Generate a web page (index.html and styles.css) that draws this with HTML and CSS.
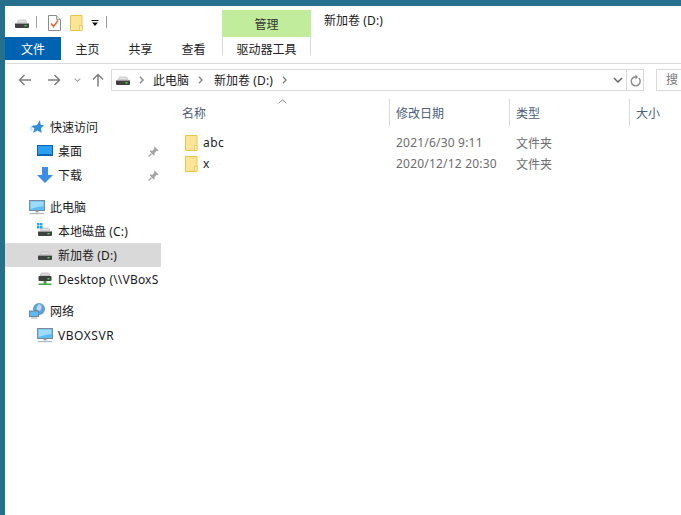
FILE: index.html
```html
<!DOCTYPE html>
<html lang="zh-CN">
<head>
    <meta charset="UTF-8">
    <meta name="viewport" content="width=device-width, initial-scale=1.0">
    <title>新加卷 (D:)</title>
    <link rel="stylesheet" href="styles.css">
</head>
<body>
    <svg class="icon-defs" width="0" height="0">
        <defs>
            <symbol id="drive" viewBox="0 0 16 16">
                <path d="M3 7.500 4.500 5h7L13 7.500z" fill="#e2e2e2" stroke="#b4b4b4" stroke-width=".6"/>
                <rect x="1" y="8" width="14" height="5" rx="1" fill="#404040"/>
                <rect x="1" y="8" width="14" height="1" fill="#9a9a9a"/>
                <rect x="10.500" y="10" width="2" height="1.500" fill="#46d846"/>
            </symbol>
            <symbol id="folder" viewBox="0 0 13 16">
                <path d="M.5.500h11.500v15H.5z" fill="#fde597" stroke="#eac54e"/>
                <path d="M9.500 15.500v-5h2.500v5z" fill="#fff3c4" stroke="#eac54e" stroke-width=".8"/>
            </symbol>
            <symbol id="pin" viewBox="0 0 11 11">
                <path d="M6.500.5 10.500 4.500 9.300 5.300 8.500 5 6.500 7 6.700 9 5.800 9.500 1.800 5.500 2.300 4.600 4.300 4.800 6.300 2.800 6 2z" fill="#a3a3a3"/>
                <path d="M3.500 7.700.6 10.500" stroke="#a3a3a3" stroke-width="1.200"/>
            </symbol>
            <symbol id="monitor" viewBox="0 0 16 16">
                <rect x=".5" y="1.500" width="15" height="10" fill="#5cbcf5" stroke="#7a8b99"/>
                <path d="M1.500 2.500h13v4.500q-6 .5-13 3z" fill="#9ddcfb"/>
                <path d="M6.500 12h3v1.500h-3z" fill="#9aa7b2"/>
                <path d="M1 14h14v1.200H1z" fill="#b0b8c0"/>
            </symbol>
            <symbol id="chev" viewBox="0 0 5 8">
                <path d="M1 .8 4 4 1 7.200" fill="none" stroke="#8a8a8a" stroke-width="1.500"/>
            </symbol>
        </defs>
    </svg>

    <div class="window">
        <div class="title-row">
            <div class="qat">
                <svg class="qat-drive"><use href="#drive"/></svg>
                <span class="qat-sep"></span>
                <svg class="qat-props" viewBox="0 0 13 16">
                    <path d="M.5.500h8l4 4v11H.5z" fill="#fff" stroke="#8c8c8c"/>
                    <path d="M8.500.5v4h4" fill="#e6e6e6" stroke="#8c8c8c" stroke-width=".8"/>
                    <path d="M3 8.500l2.500 3 4.500-6" fill="none" stroke="#e8642c" stroke-width="1.500"/>
                </svg>
                <svg class="qat-folder"><use href="#folder"/></svg>
                <svg class="qat-down" viewBox="0 0 8 8">
                    <path d="M.5 1h7v1h-7zM1 3.500h6L4 7z" fill="#111"/>
                </svg>
                <span class="qat-sep"></span>
            </div>
            <div class="context-head">管理</div>
            <div class="window-title">新加卷 <span class="latin">(D:)</span></div>
        </div>

        <div class="ribbon">
            <div class="tab tab-file">文件</div>
            <div class="tab tab-plain">主页</div>
            <div class="tab tab-plain">共享</div>
            <div class="tab tab-plain">查看</div>
            <div class="tab tab-context">驱动器工具</div>
        </div>

        <div class="nav-bar">
            <svg class="arrow-back" viewBox="0 0 13 12">
                <path d="M13 6H2M6.500 1 1.500 6l5 5" fill="none" stroke="#7f7f7f" stroke-width="1.500"/>
            </svg>
            <svg class="arrow-fwd" viewBox="0 0 13 12">
                <path d="M0 6h11M6.500 1l5 5-5 5" fill="none" stroke="#7f7f7f" stroke-width="1.500"/>
            </svg>
            <svg class="arrow-menu" viewBox="0 0 7 5">
                <path d="M.7.700 3.500 3.500 6.300.7" fill="none" stroke="#a6a6a6" stroke-width="1.200"/>
            </svg>
            <svg class="arrow-up" viewBox="0 0 12 14">
                <path d="M6 13.500V2M1 6.500l5-5 5 5" fill="none" stroke="#7f7f7f" stroke-width="1.500"/>
            </svg>
            <div class="address">
                <svg class="crumb-icon"><use href="#drive"/></svg>
                <svg class="crumb-sep"><use href="#chev"/></svg>
                <span class="crumb">此电脑</span>
                <svg class="crumb-sep"><use href="#chev"/></svg>
                <span class="crumb">新加卷 <span class="latin">(D:)</span></span>
                <svg class="crumb-sep"><use href="#chev"/></svg>
                <svg class="address-drop" viewBox="0 0 10 6">
                    <path d="M1 1l4 4 4-4" fill="none" stroke="#666" stroke-width="1.500"/>
                </svg>
                <div class="refresh">
                    <svg viewBox="0 0 12 13">
                        <path d="M9.700 4A4.500 4.500 0 1 1 5.500 3H8" fill="none" stroke="#8a8a8a" stroke-width="1.400"/>
                        <path d="M6.500.5 9 3 6.500 5.500z" fill="#8a8a8a"/>
                    </svg>
                </div>
            </div>
            <div class="search">搜</div>
        </div>

        <div class="main">
            <nav class="tree">
                <div class="tree-group">
                    <div class="tree-item">
                        <svg class="tree-icon" viewBox="0 0 16 16">
                            <path d="M11 1 11.500 5.500 15 6.500 12 9 12.500 14 8.500 11.500 4 14 5.500 9.500 2 7 8 6z" fill="#2f8fdc"/>
                            <path d="M.5 9h3M1.500 11h2" stroke="#9cc9ee"/>
                        </svg>
                        <span>快速访问</span>
                    </div>
                    <div class="tree-item sub">
                        <svg class="tree-icon" viewBox="0 0 16 16">
                            <rect x=".5" y="2.500" width="15" height="10" fill="#2aa0f2" stroke="#0b62b5"/>
                            <path d="M1.500 11h13v1h-13z" fill="#0b62b5"/>
                        </svg>
                        <span>桌面</span>
                        <svg class="pin"><use href="#pin"/></svg>
                    </div>
                    <div class="tree-item sub">
                        <svg class="tree-icon" viewBox="0 0 16 16">
                            <path d="M5 0h6v8h5l-8 8-8-8h5z" fill="#3a8ee6"/>
                        </svg>
                        <span>下载</span>
                        <svg class="pin"><use href="#pin"/></svg>
                    </div>
                </div>
                <div class="tree-group">
                    <div class="tree-item">
                        <svg class="tree-icon"><use href="#monitor"/></svg>
                        <span>此电脑</span>
                    </div>
                    <div class="tree-item sub">
                        <svg class="tree-icon" viewBox="0 0 16 16">
                            <use href="#drive" width="16" height="16"/>
                            <path d="M0 0h2.500v2.500H0zM3 0h2.500v2.500H3zM0 3h2.500v2.500H0zM3 3h2.500v2.500H3z" fill="#22a5f0"/>
                        </svg>
                        <span>本地磁盘 <span class="latin">(C:)</span></span>
                    </div>
                    <div class="tree-item sub selected">
                        <svg class="tree-icon"><use href="#drive"/></svg>
                        <span>新加卷 <span class="latin">(D:)</span></span>
                    </div>
                    <div class="tree-item sub">
                        <svg class="tree-icon" viewBox="0 0 16 16">
                            <path d="M3 4.500 4.500 2h7L13 4.500z" fill="#dcdcdc" stroke="#a8a8a8" stroke-width=".6"/>
                            <rect x="1.500" y="5" width="13" height="5" rx="1" fill="#3e3e3e"/>
                            <rect x="10.500" y="7" width="2" height="1.500" fill="#46d846"/>
                            <path d="M6.500 10h3v2.500h5V14h-13v-1.500h5z" fill="#43a843"/>
                        </svg>
                        <span class="latin">Desktop (\\VBoxS</span>
                    </div>
                </div>
                <div class="tree-group">
                    <div class="tree-item">
                        <svg class="tree-icon" viewBox="0 0 16 16">
                            <circle cx="10" cy="6" r="6" fill="#5f9fd6"/>
                            <path d="M10 1q3.500 1 2.500 4.500t-3.500 2-1-4z" fill="#b9d9ee"/>
                            <rect x=".5" y="8" width="9" height="5.500" fill="#5cbcf5" stroke="#6f8494"/>
                            <path d="M2 14.500h6v1H2z" fill="#9aa7b2"/>
                        </svg>
                        <span>网络</span>
                    </div>
                    <div class="tree-item sub">
                        <svg class="tree-icon"><use href="#monitor"/></svg>
                        <span class="latin-wide">VBOXSVR</span>
                    </div>
                </div>
            </nav>

            <section class="files">
                <svg class="sort-mark" viewBox="0 0 9 5">
                    <path d="M.7 4.300 4.500.8l3.800 3.500" fill="none" stroke="#8c8c8c"/>
                </svg>
                <div class="col-head">
                    <div class="col col-name">名称</div>
                    <div class="col col-date">修改日期</div>
                    <div class="col col-type">类型</div>
                    <div class="col col-size">大小</div>
                </div>
                <div class="file-row">
                    <div class="col col-name">
                        <svg class="file-icon"><use href="#folder"/></svg>
                        <span class="file-name">abc</span>
                    </div>
                    <div class="col col-date latin">2021/6/30 9:11</div>
                    <div class="col col-type">文件夹</div>
                </div>
                <div class="file-row">
                    <div class="col col-name">
                        <svg class="file-icon"><use href="#folder"/></svg>
                        <span class="file-name">x</span>
                    </div>
                    <div class="col col-date latin">2020/12/12 20:30</div>
                    <div class="col col-type">文件夹</div>
                </div>
            </section>
        </div>
    </div>
</body>
</html>
```

FILE: styles.css
```css
:root {
    --desktop: #25708c;
    --line: #d9d9d9;
    --text: #1a1a1a;
    --muted: #6d6d6d;
    --head: #4c607a;
}

* {
    margin: 0;
    padding: 0;
    box-sizing: border-box;
    font-family: "Noto Sans", "Noto Sans CJK SC", sans-serif;
}

html, body {
    height: 100%;
    overflow: hidden;
}

body {
    background: var(--desktop);
    padding: 6px 0 0 5px;
    font-size: 12px;
    color: var(--text);
}

.icon-defs {
    position: absolute;
}

.window {
    background: white;
    height: 100%;
}

.latin {
    letter-spacing: .2px;
}

.latin-wide {
    letter-spacing: .55px;
}

/* Title row */
.title-row {
    height: 31px;
    display: flex;
    align-items: flex-end;
}

.qat {
    width: 217px;
    height: 31px;
    display: flex;
    align-items: center;
    padding: 2px 0 0 9px;
}

.qat-drive {
    width: 16px;
    height: 16px;
}

.qat-sep {
    width: 1px;
    height: 12px;
    margin-top: -2px;
    background: #a0a0a0;
}

.qat-drive + .qat-sep {
    margin-left: 6px;
}

.qat-props {
    width: 13px;
    height: 16px;
    margin-left: 11px;
}

.qat-folder {
    width: 13px;
    height: 16px;
    margin-left: 9px;
}

.qat-down {
    width: 8px;
    height: 8px;
    margin-left: 8px;
}

.qat-down + .qat-sep {
    margin-left: 7px;
}

.context-head {
    width: 89px;
    height: 27px;
    background: #c0ec9c;
    color: #333;
    display: flex;
    align-items: center;
    justify-content: center;
    padding-top: 1px;
}

.window-title {
    padding: 5px 0 0 13px;
    height: 31px;
    line-height: 20px;
    align-self: flex-start;
}

/* Ribbon */
.ribbon {
    height: 27px;
    border-bottom: 1px solid var(--line);
    display: flex;
    align-items: flex-start;
}

.tab {
    height: 23px;
    display: flex;
    align-items: center;
    justify-content: center;
    color: #222;
}

.tab-file {
    width: 56px;
    background: #0063b1;
    color: white;
}

.tab-plain {
    width: 53px;
}

.tab-context {
    width: 89px;
    height: 18px;
    margin-left: 2px;
    padding-top: 5px;
    border-left: 1px solid var(--line);
    border-right: 1px solid var(--line);
}

/* Back, forward, address, search */
.nav-bar {
    height: 22px;
    margin-top: 5px;
    display: flex;
    align-items: center;
}

.nav-bar > * {
    flex: none;
}

.arrow-back {
    width: 13px;
    height: 12px;
    margin-left: 13px;
}

.arrow-fwd {
    width: 13px;
    height: 12px;
    margin-left: 17px;
}

.arrow-menu {
    width: 7px;
    height: 5px;
    margin-left: 13px;
}

.arrow-up {
    width: 12px;
    height: 14px;
    margin-left: 11px;
}

.address {
    width: 533px;
    height: 22px;
    margin-left: 7px;
    border: 1px solid var(--line);
    display: flex;
    align-items: center;
    padding-left: 3px;
}

.crumb-icon {
    width: 16px;
    height: 16px;
}

.crumb-sep {
    width: 5px;
    height: 8px;
    margin: 0 11px 0 9px;
}

.crumb-sep:nth-of-type(2) {
    margin: 0 9px 0 8px;
}

.address-drop {
    width: 10px;
    height: 6px;
    margin-left: auto;
    margin-right: 3px;
}

.refresh {
    width: 17px;
    height: 20px;
    border-left: 1px solid var(--line);
    display: flex;
    align-items: center;
    justify-content: center;
}

.refresh svg {
    width: 12px;
    height: 13px;
}

.search {
    width: 25px;
    height: 22px;
    margin-left: 12px;
    border: 1px solid var(--line);
    border-right: none;
    padding-left: 9px;
    line-height: 20px;
    color: #777;
    white-space: nowrap;
}

/* Tree on the left */
.main {
    display: flex;
}

.tree {
    width: 156px;
    padding-top: 24px;
    flex: none;
}

.tree-group {
    margin-bottom: 8px;
}

.tree-item {
    height: 24px;
    display: flex;
    align-items: center;
    padding-left: 24px;
    position: relative;
    white-space: nowrap;
}

.tree-item.sub {
    padding-left: 32px;
}

.tree-item.selected {
    background: var(--line);
}

.tree-icon {
    width: 16px;
    height: 16px;
    margin-right: 5px;
    flex: none;
}

.pin {
    position: absolute;
    left: 143px;
    top: 7px;
    width: 11px;
    height: 11px;
}

/* File list */
.files {
    position: relative;
    flex: 1;
    min-width: 0;
    padding-top: 8px;
}

.sort-mark {
    position: absolute;
    left: 117px;
    top: 8px;
    width: 9px;
    height: 5px;
}

.col-head {
    height: 27px;
    display: flex;
    color: var(--head);
}

.col-head .col {
    line-height: 29px;
    border-right: 1px solid var(--line);
}

.col-head .col-name {
    padding-left: 21px;
    display: block;
}

.col-head .col-size {
    border-right: none;
    width: 40px;
}

.col {
    flex: none;
    padding-left: 6px;
}

.col-name {
    width: 229px;
    padding-left: 24px;
    display: flex;
    align-items: center;
}

.col-date {
    width: 120px;
}

.col-type {
    width: 120px;
}

.file-row {
    height: 21px;
    display: flex;
    align-items: center;
    color: var(--muted);
}

.col-head + .file-row {
    margin-top: 6px;
}

.file-icon {
    width: 13px;
    height: 16px;
    margin-right: 5px;
}

.file-name {
    color: var(--text);
    letter-spacing: .4px;
}
```
